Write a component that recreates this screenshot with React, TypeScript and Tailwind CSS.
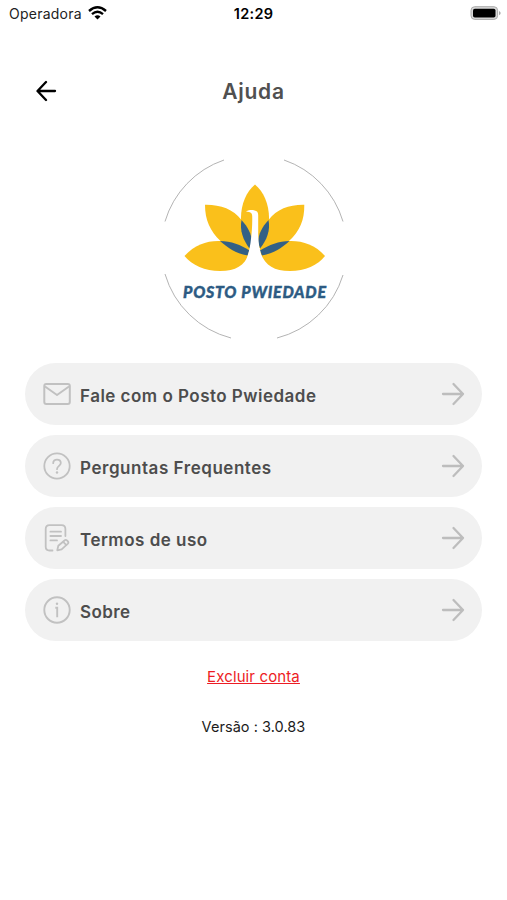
import type { ReactNode } from 'react';

const menuItems: { label: string; icon: ReactNode; className: string }[] = [
  { label: 'Fale com o Posto Pwiedade', icon: <MailIcon />, className: 'tracking-[0.48px]' },
  { label: 'Perguntas Frequentes', icon: <QuestionIcon />, className: 'tracking-[0.54px]' },
  { label: 'Termos de uso', icon: <TermsIcon />, className: 'tracking-[0.5px]' },
  { label: 'Sobre', icon: <InfoIcon />, className: 'tracking-[0.4px]' },
];

function MailIcon() {
  return (
    <svg width="28" height="28" viewBox="0 0 28 28" fill="none" stroke="#c1c1c1" strokeWidth="2" strokeLinejoin="round">
      <rect x="1.3" y="4" width="25.5" height="20" rx="2" />
      <path d="M2 6.5L14 15L26 6.5" />
    </svg>
  );
}

function QuestionIcon() {
  return (
    <svg width="28" height="28" viewBox="0 0 28 28" fill="none" stroke="#c1c1c1" strokeWidth="1.8" strokeLinecap="round">
      <circle cx="14" cy="14" r="12.7" />
      <path d="M10.2 11.2C10.2 8.8 11.8 7.6 14 7.6S17.8 9 17.8 11.1C17.8 13.9 14 14 14 17.2" />
      <circle cx="14" cy="20.5" r="1.2" fill="#c1c1c1" stroke="none" />
    </svg>
  );
}

function TermsIcon() {
  return (
    <svg width="28" height="28" viewBox="0 0 28 28" fill="none" stroke="#c1c1c1" strokeWidth="1.8" strokeLinecap="round" strokeLinejoin="round">
      <path d="M9.5 26.5H6.5C4 26.5 2.7 25 2.7 22.8V5C2.7 2.6 4.1 1.2 6.5 1.2H18.5C21 1.2 22.4 2.6 22.4 5V12" />
      <path d="M7.4 7.7H18M7.4 12H18M7.4 16.4H14" />
      <path d="M14.3 26.3L15.3 21.8L21.8 16.2C23.3 15.1 26.4 18 24.9 19.6L18.6 25.3Z" />
      <path d="M20.2 17.8L23.2 21" />
    </svg>
  );
}

function InfoIcon() {
  return (
    <svg width="28" height="28" viewBox="0 0 28 28" fill="none" stroke="#c1c1c1" strokeWidth="1.9">
      <circle cx="14" cy="14" r="12.7" />
      <path d="M12.3 11.7H14.2V21.2" />
      <circle cx="14" cy="7.8" r="1.2" fill="#c1c1c1" stroke="none" />
    </svg>
  );
}

function StatusBar() {
  return (
    <div className="flex h-7 items-center justify-between pl-[9px] pr-[6px] text-black">
      <div className="flex flex-1 items-center gap-[6px]">
        <span className="-mt-0.5 text-[14px] tracking-[0.24px] text-[#222]">Operadora</span>
        <svg className="-mt-[3px]" width="19" height="14" viewBox="0 0 19 14" fill="none" stroke="#000" strokeWidth="2.4">
          <path d="M1 5Q9.5 -2.3 18 5" />
          <path d="M4 8.1Q9.5 3.4 15 8.1" />
          <path d="M6.5 10.4Q9.5 8.2 12.5 10.4L9.5 13.5Z" fill="#000" stroke="none" />
        </svg>
      </div>
      <span className="mr-[3px] text-[14.5px] font-semibold tracking-[0.3px]">12:29</span>
      <div className="flex flex-1 justify-end">
        <svg className="-mt-[2px]" width="31" height="14" viewBox="0 0 31 14">
          <rect x="1" y="0.7" width="26.6" height="12.7" rx="3.7" fill="#d8d8d8" stroke="#aaa" strokeWidth="1" />
          <rect x="3" y="2.7" width="22.5" height="8.8" rx="1.8" fill="#000" />
          <path d="M29 5V9.2Q30.7 8.3 30.7 7.1T29 5Z" fill="#aaa" />
        </svg>
      </div>
    </div>
  );
}

function Logo() {
  return (
    <svg width="200" height="200" viewBox="0 0 200 200">
      <g fill="none" stroke="#aaa" strokeWidth="0.9">
        <path d="M10 71.5A93 93 0 0 1 69 10" />
        <path d="M129 10A93 93 0 0 1 188 71.5" />
        <path d="M10 124A93 93 0 0 0 76 188" />
        <path d="M188 125A93 93 0 0 1 122 188" />
      </g>
      <g fill="#fac01b">
        <path d="M100 34.5C91 42 85.5 55 86 70L95 98H105L114 70C114.5 55 109 42 100 34.5Z" />
        <path d="M50 54.8C65 54.5 78 59 86.5 70C89 82 93 92 96 101L65.5 91C55 81 50 70 50 54.8Z" />
        <path d="M149.3 54.8C134.5 54.5 122 59 113.5 70C111 82 107 92 104 101L134 91C145 81 149.5 70 149.3 54.8Z" />
        <path d="M29.5 106C40 94.5 52 90.5 65.5 91L95 102C90 115 82 121 65 121C50 121 37 115 29.5 106Z" />
        <path d="M170 106C160 94.5 147 90.5 134 91L105 102C110 115 118 121 135 121C150 121 163 115 170 106Z" />
      </g>
      <g fill="#336085">
        <path d="M86.5 70C93 77 96.5 84 97 92L94.5 98.5C88 90 84.5 80 86.5 70Z" />
        <path d="M113.5 70C107 77 103.5 84 103 92L105 98.5C112 90 115.5 80 113.5 70Z" />
        <path d="M65 91C76 91 86 95 94.5 100.5L92.5 105.5C80 103 73 98 65 91Z" />
        <path d="M134.5 91C124 91 114 95 105 100.5L107 105.5C119 103 127 98 134.5 91Z" />
      </g>
      <path d="M91 61.8C94 59.7 97 60 99.5 60.4C102 60.6 103.2 62.3 103.2 65V84C103.5 99 106.5 109 112 117L107 123H93L88 117C92 109 94.5 101 95.5 93C97 82 97.4 74 97.2 66C97.2 62.8 95 61.7 91 61.8Z" fill="#fff" />
      <text x="28" y="148" textLength="143" lengthAdjust="spacing" fill="#2d5b83" stroke="#2d5b83" strokeWidth="0.4" className="font-['Lato',sans-serif] text-[16px] font-black italic">
        POSTO PWIEDADE
      </text>
    </svg>
  );
}

export default function App() {
  return (
    <div className="min-h-[900px] w-[507px] bg-white font-['Inter',sans-serif]">
      <StatusBar />

      <header className="mt-[43px] flex h-10 items-center px-9">
        <button className="w-10" aria-label="Voltar">
          <svg width="21" height="22" viewBox="0 0 21 22" fill="none" stroke="#000" strokeWidth="2.3" strokeLinecap="round" strokeLinejoin="round">
            <path d="M10 2L1.5 11L10 20M2 11H19" />
          </svg>
        </button>
        <h1 className="mt-0.5 flex-1 text-center text-[21px] font-semibold tracking-[0.7px] text-[#505050]">Ajuda</h1>
        <div className="w-10" />
      </header>

      <div className="mt-[39px] flex justify-center pl-[3px]">
        <Logo />
      </div>

      <nav className="mt-[13px] flex flex-col gap-[10.5px] px-[25px]">
        {menuItems.map((item) => (
          <button key={item.label} className="flex h-[61.5px] items-center rounded-full bg-[#f1f1f1] pl-[18px] pr-[17px]">
            {item.icon}
            <span className={`ml-[9px] mt-[5px] text-[17px] font-semibold text-[#4d4d4d] ${item.className}`}>{item.label}</span>
            <svg className="ml-auto" width="24" height="24" viewBox="0 0 24 24" fill="none" stroke="#bdbdbd" strokeWidth="2.3" strokeLinecap="round" strokeLinejoin="round">
              <path d="M2 12H22M12.5 2L22 12L12.5 22" />
            </svg>
          </button>
        ))}
      </nav>

      <div className="mt-[25px] flex flex-col items-center">
        <a className="text-[15px] leading-[22px] tracking-[0.12px] text-[#ed1c24] underline">Excluir conta</a>
        <p className="mt-7 text-[14.5px] leading-[22px] tracking-[0.05px] text-[#1c1c1c]">Versão : 3.0.83</p>
      </div>
    </div>
  );
}
